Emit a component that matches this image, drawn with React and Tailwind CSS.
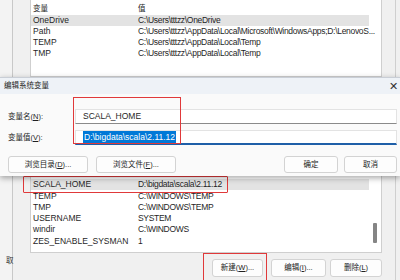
const font = { fontFamily: '"Liberation Sans", "Noto Sans CJK SC", sans-serif' };

const topRows = [
  ['OneDrive', 'C:\\Users\\tttzz\\OneDrive', true],
  ['Path', 'C:\\Users\\tttzz\\AppData\\Local\\Microsoft\\WindowsApps;D:\\LenovoS...'],
  ['TEMP', 'C:\\Users\\tttzz\\AppData\\Local\\Temp'],
  ['TMP', 'C:\\Users\\tttzz\\AppData\\Local\\Temp'],
];

const bottomRows = [
  ['SCALA_HOME', 'D:\\bigdata\\scala\\2.11.12', true],
  ['TEMP', 'C:\\WINDOWS\\TEMP'],
  ['TMP', 'C:\\WINDOWS\\TEMP'],
  ['USERNAME', 'SYSTEM'],
  ['windir', 'C:\\WINDOWS'],
  ['ZES_ENABLE_SYSMAN', '1'],
];

function Row({ name, value, selected, h }) {
  return (
    <div className={`flex items-center whitespace-nowrap ${h} ${selected ? 'bg-[#e3e3e3]' : ''}`}>
      <span className="w-[107px] pl-[2px] shrink-0">{name}</span>
      <span className="tracking-[-0.3px]">{value}</span>
    </div>
  );
}

function Btn({ children, className = '' }) {
  return (
    <div className={`h-[17px] flex items-center justify-center bg-[#fdfdfd] border border-[#d3d3d3] rounded-[3px] text-[#222] text-[7.5px] ${className}`}>
      {children}
    </div>
  );
}

function Gutter() {
  return <div className="w-[13px] shrink-0 h-full border-r border-[#c8c8c8] bg-[#f3f3f3]" />;
}

export default function App() {
  return (
    <div className="w-[400px] h-[280px] overflow-hidden bg-[#f0f0f0] text-[8.5px] text-[#1f1f1f] flex flex-col" style={font}>
      {/* back window, upper list */}
      <div className="h-[77px] flex shrink-0">
        <Gutter />
        <div className="w-[17px] shrink-0" />
        <div className="w-[352px] h-full bg-white border-x border-b border-[#cfcfcf] pr-[12px] pt-[2px]">
          <div className="h-[13px] flex items-center whitespace-nowrap text-[7.5px]">
            <span className="w-[107px] pl-[2px]">变量</span>
            <span>值</span>
          </div>
          {topRows.map(([n, v, s]) => (
            <Row key={n} name={n} value={v} selected={s} h="h-[11px]" />
          ))}
        </div>
        <div className="flex-1 border-r border-[#cfcfcf] mr-[4px]" />
      </div>

      {/* edit dialog */}
      <div className="h-[99px] shrink-0 relative z-10 bg-[#fafafa] shadow-[0_2px_6px_rgba(0,0,0,0.35)] border-t border-[#c9ced6]">
        <div className="h-[16px] bg-[#eef2f7] flex items-center justify-between pl-[4px] pr-[2px]">
          <span className="text-[7.5px]">编辑系统变量</span>
          <span className="text-[11px] leading-none text-[#333]">✕</span>
        </div>
        <div className="flex items-center mt-[15px] h-[15px]">
          <span className="w-[75px] pl-[8px] shrink-0 text-[7.5px]">变量名(<span className="underline">N</span>):</span>
          <div className="flex-1 mr-[3px] h-full bg-white border border-[#e3e3e3] border-b-[#8a8a8a] flex items-center pl-[7px]">
            SCALA_HOME
          </div>
        </div>
        <div className="flex items-center mt-[6px] h-[15px]">
          <span className="w-[75px] pl-[8px] shrink-0 text-[7.5px]">变量值(<span className="underline">V</span>):</span>
          <div className="flex-1 mr-[3px] h-full bg-white border border-[#e3e3e3] border-b-2 border-b-[#1f5fa8] flex items-center pl-[7px]">
            <span className="bg-[#0078d7] text-white px-[1px]">D:\bigdata\scala\2.11.12</span>
          </div>
        </div>
        <div className="flex items-center mt-[11px] pl-[8px] pr-[3px]">
          <Btn className="w-[80px]">浏览目录(<span className="underline">D</span>)...</Btn>
          <Btn className="w-[80px] ml-[8px]">浏览文件(<span className="underline">F</span>)...</Btn>
          <div className="flex-1" />
          <Btn className="w-[54px] border-[#6a9fd4]">确定</Btn>
          <Btn className="w-[53px] ml-[6px]">取消</Btn>
        </div>
        <div className="absolute left-[73px] top-[19px] w-[108px] h-[47px] border-[1.5px] border-[#e0393a]" />
      </div>

      {/* back window, lower list */}
      <div className="flex-1 flex relative">
        <Gutter />
        <div className="w-[17px] shrink-0" />
        <div className="w-[352px] flex flex-col">
          <div className="h-[77px] bg-white border-x border-b border-[#cfcfcf] pt-[3px] pr-[12px] relative">
            {bottomRows.map(([n, v, s]) => (
              <Row key={n} name={n} value={v} selected={s} h="h-[11.25px]" />
            ))}
            <div className="absolute right-[4px] top-[47px] w-[4px] h-[20px] bg-[#858585] rounded-[1px]" />
          </div>
          <div className="flex mt-[6px] pl-[182px]">
            <Btn className="w-[51px] h-[18px]">新建(<span className="underline">W</span>)...</Btn>
            <Btn className="w-[55px] h-[18px] ml-[8px]">编辑(<span className="underline">I</span>)...</Btn>
            <Btn className="w-[52px] h-[18px] ml-[4px]">删除(<span className="underline">L</span>)</Btn>
          </div>
        </div>
        <div className="flex-1 border-r border-[#cfcfcf] mr-[4px]" />
        <span className="absolute left-[6px] top-[79px] text-[7.5px] text-[#333]">取</span>
        <div className="absolute left-[23px] top-0 w-[205px] h-[17px] border-[1.5px] border-[#e0393a] rounded-[1px]" />
        <div className="absolute left-[203px] top-[77px] w-[64px] h-[30px] border-[1.5px] border-[#e0393a]" />
      </div>
    </div>
  );
}
